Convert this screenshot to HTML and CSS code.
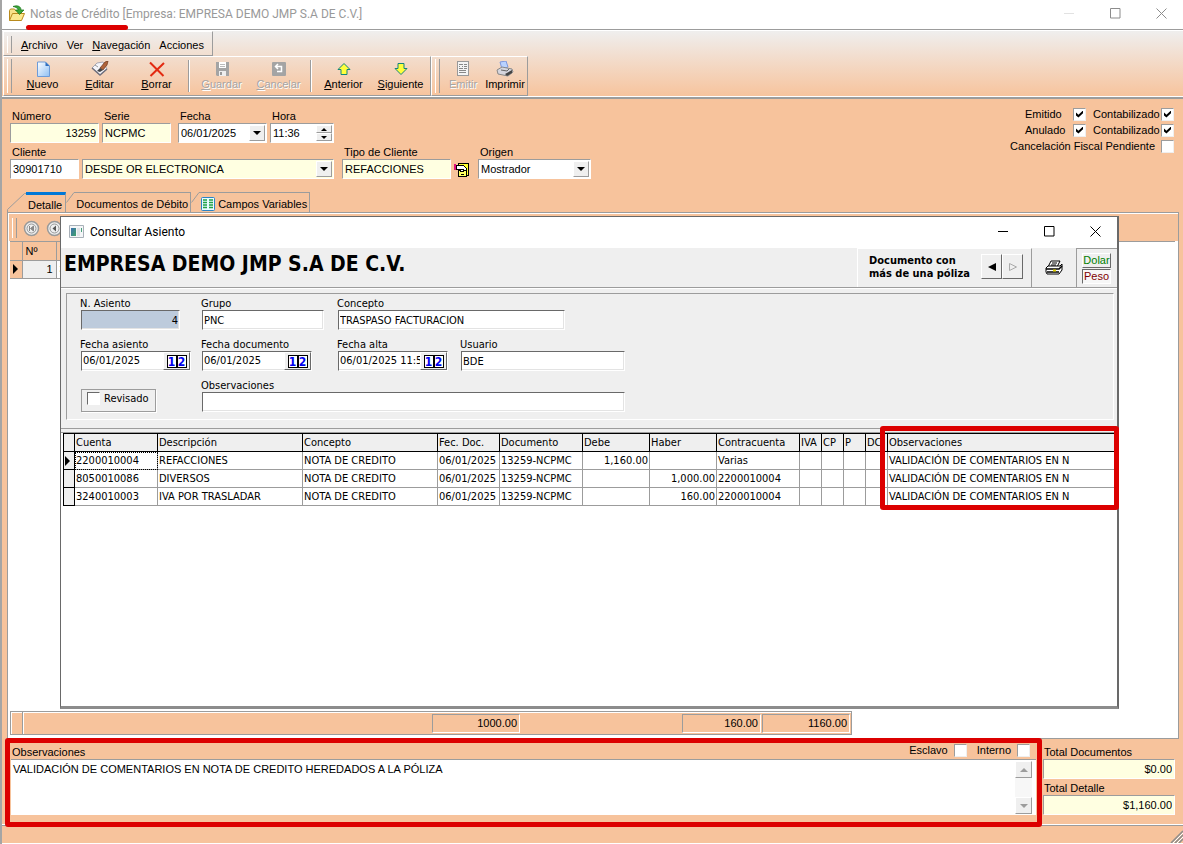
FILE: index.html
```html
<!DOCTYPE html>
<html lang="es">
<head>
<meta charset="utf-8">
<title>Notas de Crédito</title>
<link rel="stylesheet" href="styles.css">
</head>
<body>
<div class="window">
  <header class="titlebar">
    <svg class="title-icon" width="18" height="18" viewBox="0 0 18 18">
      <path d="M1.500 15.500V5.500l1-1.500h4l1 1.500h5.500v3" fill="#f7e28a" stroke="#b98a1c"/>
      <path d="M1.500 15.500l3-7h12l-3 7z" fill="#fbe88f" stroke="#b98a1c"/>
      <path d="M5 1.500c4-1.500 8-.5 8 3.500h3l-4.500 4.500-4-4.500h2.800c-.8-2-2.500-3-5.300-3.500z" fill="#3aa63a" stroke="#157315" stroke-width=".7"/>
    </svg>
    <h1 class="title-text"><span class="marked">Notas de Crédito</span> [Empresa: EMPRESA DEMO JMP S.A DE C.V.]</h1>
    <div class="caption-buttons faded">
      <button type="button" aria-label="Minimizar" class="dim"><svg width="11" height="11"><path d="M0 5.500h10" stroke="currentColor"/></svg></button>
      <button type="button" aria-label="Maximizar"><svg width="11" height="11"><path d="M.5.500h9.500v9.500H.5z" fill="none" stroke="currentColor"/></svg></button>
      <button type="button" aria-label="Cerrar"><svg width="11" height="11"><path d="M.5.500l10 10M10.500.500l-10 10" stroke="currentColor"/></svg></button>
    </div>
  </header>

  <div class="rebar">
    <nav class="band menu-band">
      <button type="button"><u>A</u>rchivo</button>
      <button type="button">Ver</button>
      <button type="button"><u>N</u>avegación</button>
      <button type="button">Acciones</button>
    </nav>
    <div class="band-row">
      <div class="band tool-band">
        <button type="button" class="tool">
          <svg width="16" height="16"><defs><linearGradient id="pg" x2="1" y2="1"><stop offset="0" stop-color="#fff"/><stop offset="1" stop-color="#8fc0f5"/></linearGradient></defs><path d="M2.500 1h8l4 4v10.500h-12z" fill="url(#pg)" stroke="#6d9bd8"/><path d="M10.500 1v4h4z" fill="#2f6fc0"/></svg>
          <span><u>N</u>uevo</span></button>
        <button type="button" class="tool">
          <svg width="18" height="16"><path d="M1 7l5-5 6-1 4 7-7 6z" fill="#f4f4fa" stroke="#a8a8b4"/><path d="M1 7l8 7 7-6" fill="none" stroke="#70707c" stroke-width="1.500"/><path d="M9 7l5-6 3-1-1 4-4 5z" fill="#b0643c" stroke="#6b3318" stroke-width=".7"/><path d="M6 10l3-3 3 2-3 2z" fill="#444"/><path d="M4 4l3 2" stroke="#999"/></svg>
          <span><u>E</u>ditar</span></button>
        <button type="button" class="tool">
          <svg width="16" height="16"><path d="M1 1.500L14.500 15M15 2L1.500 15" stroke="#e32a10" stroke-width="2"/></svg>
          <span><u>B</u>orrar</span></button>
        <i class="sep"></i>
        <button type="button" class="tool" disabled>
          <svg width="16" height="16"><path d="M2 1h13v14H3l-1-1z" fill="#a4a4a4"/><path d="M5 1h7v6H5z" fill="#fff"/><path d="M6 3.500h5M6 5.500h5" stroke="#bbb"/><path d="M5 10h7v5H5z" fill="#eee"/><path d="M6 11h2v3H6z" fill="#999"/></svg>
          <span><u>G</u>uardar</span></button>
        <button type="button" class="tool" disabled>
          <svg width="16" height="16"><rect x="1" y="1" width="14" height="14" rx="1" fill="#a4a4a4"/><path d="M5 5.500h5.500v5H6M7 3L4.500 5.500 7 8" fill="none" stroke="#fff" stroke-width="1.500"/></svg>
          <span><u>C</u>ancelar</span></button>
        <i class="sep"></i>
        <button type="button" class="tool">
          <svg width="16" height="16"><path d="M8 2.500l6 6h-3v5H5v-5H2z" fill="#ffff3c" stroke="#13857c"/></svg>
          <span><u>A</u>nterior</span></button>
        <button type="button" class="tool">
          <svg width="16" height="16"><path d="M5 2.500h6v5h3l-6 6-6-6h3z" fill="#ffff3c" stroke="#13857c"/></svg>
          <span><u>S</u>iguiente</span></button>
      </div>
      <div class="band tool-band narrow">
        <button type="button" class="tool" disabled>
          <svg width="16" height="16" shape-rendering="crispEdges"><path d="M2.500.500h11v14h-11z" fill="#f4f4f4" stroke="#999"/><path d="M4 3.500h4M4 5.500h1M7 5.500h1M4 7.500h4M9 3.500h3M9 5.500h3M9 7.500h3M4 9.500h7M4 11.500h7" stroke="#888"/></svg>
          <span>Emitir</span></button>
        <button type="button" class="tool">
          <svg width="18" height="16"><path d="M4 1l6-1 2 6-6 2z" fill="#b9d2ff" stroke="#7d97dd"/><path d="M1 9l5-3 10 2 1 3-5 4-10-2z" fill="#d6d6de" stroke="#888"/><path d="M9 13l7-4v3l-5 3z" fill="#444"/><path d="M5 9l6 1 2-2" stroke="#666" fill="none"/></svg>
          <span>Imprimir</span></button>
      </div>
    </div>
  </div>

  <main class="body">
    <form class="form">
      <div class="fields">
        <div class="line">
          <div class="field w-89"><label for="numero">Número</label><input id="numero" class="box soft num" value="13259"></div>
          <div class="field w-69 gap-7"><label for="serie">Serie</label><input id="serie" class="box soft" value="NCPMC"></div>
          <div class="field w-89"><label for="fecha">Fecha</label><div class="box combo"><input id="fecha" value="06/01/2025"><button type="button" class="drop" aria-label="Abrir fecha"></button></div></div>
          <div class="field w-64"><label for="hora">Hora</label><div class="box combo"><input id="hora" value="11:36"><span class="spin"><button type="button" class="up" aria-label="Más"></button><button type="button" class="down" aria-label="Menos"></button></span></div></div>
        </div>
        <div class="line">
          <div class="field w-69"><label for="cliente">Cliente</label><input id="cliente" class="box" value="30901710"></div>
          <div class="field w-252 gap-8"><div class="box combo soft"><select id="nombre" aria-label="Nombre de cliente"><option>DESDE OR ELECTRONICA</option></select><i class="drop"></i></div></div>
          <div class="field w-109"><label for="tipo">Tipo de Cliente</label><input id="tipo" class="box soft" value="REFACCIONES"></div>
          <button type="button" class="card-button" aria-label="Ficha de cliente">
            <svg width="16" height="16" shape-rendering="crispEdges"><path d="M4.500 1.500h10v12h-10z" fill="#ffff30" stroke="#000"/><path d="M2.500 3.500h7l3 3v2h-5l-2-1h-3z" fill="#fff" stroke="#000"/><path d="M0 2h2v6H0z" fill="#e0107c"/><path d="M4.500 8.500h8v6h-8z" fill="#ffff60" stroke="#000"/><path d="M6.500 7.500h3v2h-3zM7 12.500h3" stroke="#000" fill="#fff"/></svg>
          </button>
          <div class="field w-113"><label for="origen">Origen</label><div class="box combo"><select id="origen"><option>Mostrador</option></select><i class="drop"></i></div></div>
        </div>
      </div>
      <div class="flags">
        <label for="emitido">Emitido</label><input type="checkbox" id="emitido" checked>
        <label for="cont1" class="second">Contabilizado</label><input type="checkbox" id="cont1" checked>
        <label for="anulado">Anulado</label><input type="checkbox" id="anulado" checked>
        <label for="cont2" class="second">Contabilizado</label><input type="checkbox" id="cont2" checked>
        <label for="cancel" class="wide">Cancelación Fiscal Pendiente</label><input type="checkbox" id="cancel">
      </div>
    </form>

    <div class="tabs" role="tablist">
      <button type="button" class="tab active" role="tab"><svg width="19" height="21"><path d="M.5 21v-3.500L17.500 1.500H19" fill="none" stroke="#9c9c9c"/></svg><span>Detalle</span></button>
      <button type="button" class="tab" role="tab"><svg width="10" height="21"><path d="M.5 10.500l7.500-10h2" fill="none" stroke="#9c9c9c"/></svg><span>Documentos de Débito</span></button>
      <button type="button" class="tab" role="tab"><svg width="10" height="21"><path d="M.5 10.500l7.500-10h2" fill="none" stroke="#9c9c9c"/></svg><span><svg width="14" height="14"><rect x=".5" y=".5" width="13" height="13" rx="1" fill="#e8fbff" stroke="#2a83c6"/><path d="M2 3h4M2 5.500h4M2 8h4M2 10.500h4M8 3h4M8 5.500h4M8 8h4M8 10.500h4" stroke="#21a045" stroke-width="1.500"/></svg>Campos Variables</span></button>
    </div>

    <section class="panel">
      <div class="detail-tools">
        <button type="button" aria-label="Primero"><svg width="17" height="17"><circle cx="8.500" cy="8.500" r="7" fill="#eee" stroke="#999" stroke-width="1.500"/><circle cx="8.500" cy="8.500" r="4.500" fill="none" stroke="#999"/><path d="M6.500 6v5M10.500 6L7.500 8.500l3 2.500z" stroke="#888" fill="#888"/></svg></button>
        <button type="button" aria-label="Anterior"><svg width="17" height="17"><circle cx="8.500" cy="8.500" r="7" fill="#eee" stroke="#999" stroke-width="1.500"/><circle cx="8.500" cy="8.500" r="4.500" fill="none" stroke="#999"/><path d="M10 5.500L6.500 8.500l3.500 3z" fill="#555"/></svg></button>
      </div>
      <div class="detail-grid">
        <table class="detail-table">
          <tr><th class="mark"></th><th>Nº</th><th></th></tr>
          <tr><td class="mark"><i class="pointer"></i></td><td class="num">1</td><td>3</td></tr>
        </table>
      </div>
      <div class="totals">
        <i class="totals-mark"></i>
        <output class="total first">1000.00</output>
        <output class="total second">160.00</output>
        <output class="total">1160.00</output>
      </div>
    </section>

    <section class="bottom">
      <div class="notes">
        <div class="notes-head">
          <label for="obs">Observaciones</label>
          <span class="notes-flags"><label for="esclavo">Esclavo</label><input type="checkbox" id="esclavo"><label for="interno" class="spaced">Interno</label><input type="checkbox" id="interno"></span>
        </div>
        <div class="notes-box">
          <textarea id="obs">VALIDACIÓN DE COMENTARIOS EN NOTA DE CREDITO HEREDADOS A LA PÓLIZA</textarea>
          <div class="scroll"><button type="button" class="up" aria-label="Subir"></button><button type="button" class="down" aria-label="Bajar"></button></div>
        </div>
        <i class="frame"></i>
      </div>
      <div class="sums">
        <label for="tdoc">Total Documentos</label><input id="tdoc" class="box soft num" value="$0.00">
        <label for="tdet">Total Detalle</label><input id="tdet" class="box soft num" value="$1,160.00">
      </div>
    </section>
  </main>
  <footer class="status"><svg width="14" height="14"><path d="M2 14L14 2M6 14l8-8M10 14l4-4" stroke="#8c8c8c" stroke-width="1.500"/><path d="M4 14L14 4M8 14l6-6" stroke="#fff"/></svg></footer>

  <div class="dialog" role="dialog" aria-label="Consultar Asiento">
    <div class="dialog-title">
      <svg width="15" height="13"><defs><linearGradient id="wg" x2="1" y2="1"><stop offset="0" stop-color="#3d6fb0"/><stop offset="1" stop-color="#3fa36a"/></linearGradient></defs><path d="M.5.500h14v12H.5z" fill="#f4f6f8" stroke="#a8b0b8"/><path d="M2 3h5v8H2z" fill="url(#wg)"/><path d="M8 3h3v8H8z" fill="#dfe3e6"/><path d="M12 3h1v4h-1z" fill="#4aa07a"/></svg>
      <h2>Consultar Asiento</h2>
      <div class="caption-buttons">
        <button type="button" aria-label="Minimizar"><svg width="11" height="11"><path d="M0 5.500h10" stroke="currentColor"/></svg></button>
        <button type="button" aria-label="Maximizar"><svg width="11" height="11"><path d="M.5.500h9.500v9.500H.5z" fill="none" stroke="currentColor"/></svg></button>
        <button type="button" aria-label="Cerrar"><svg width="11" height="11"><path d="M.5.500l10 10M10.500.500l-10 10" stroke="currentColor"/></svg></button>
      </div>
    </div>
    <div class="dialog-head">
      <h3>EMPRESA DEMO JMP S.A DE C.V.</h3>
      <div class="policy">
        <p>Documento con<br>más de una póliza</p>
        <button type="button" aria-label="Anterior"><svg width="10" height="10"><path d="M9 1v8L1 5z" fill="#000"/></svg></button>
        <button type="button" aria-label="Siguiente" disabled><svg width="10" height="10"><path d="M1.500 1.500v7l7-3.500z" fill="none" stroke="#aaa"/></svg></button>
      </div>
      <button type="button" class="print" aria-label="Imprimir">
        <svg width="18" height="16"><path d="M6 1h9l-3 6H3z" fill="#fff" stroke="#000"/><path d="M7 3h5M6 5h5" stroke="#000"/><path d="M1 8l2-2h12l2-2v6l-3 4H2l-1-2z" fill="#fff" stroke="#000"/><path d="M1 9h13l3-3M2 12h12" stroke="#000" stroke-width="1.500" fill="none"/><path d="M8 10.500h3" stroke="#e2d000" stroke-width="2"/></svg>
      </button>
      <div class="currency"><button type="button" class="dolar">Dolar</button><button type="button" class="peso">Peso</button></div>
    </div>
    <div class="dialog-form">
      <div class="group">
        <div class="dfield"><label for="nas">N. Asiento</label><input id="nas" class="sunk w-99 blue num" value="4"></div>
        <div class="dfield"><label for="grupo">Grupo</label><input id="grupo" class="sunk w-122" value="PNC"></div>
        <div class="dfield span2"><label for="concepto">Concepto</label><input id="concepto" class="sunk w-227" value="TRASPASO FACTURACION"></div>
        <div class="dfield"><label for="fas">Fecha asiento</label><div class="sunk w-110 date"><input id="fas" value="06/01/2025"><button type="button" aria-label="Calendario"><b>1</b><b>2</b></button></div></div>
        <div class="dfield"><label for="fdo">Fecha documento</label><div class="sunk w-110 date"><input id="fdo" value="06/01/2025"><button type="button" aria-label="Calendario"><b>1</b><b>2</b></button></div></div>
        <div class="dfield"><label for="fal">Fecha alta</label><div class="sunk w-110 date"><input id="fal" value="06/01/2025 11:5"><button type="button" aria-label="Calendario"><b>1</b><b>2</b></button></div></div>
        <div class="dfield"><label for="usu">Usuario</label><input id="usu" class="sunk" value="BDE"></div>
        <div class="revisado"><input type="checkbox" id="rev"><label for="rev">Revisado</label></div>
        <div class="dfield span3"><label for="dobs">Observaciones</label><input id="dobs" class="sunk"></div>
      </div>
    </div>
    <div class="entries">
      <table class="entry-table">
        <colgroup><col class="c-11"><col class="c-83"><col class="c-145"><col class="c-135"><col class="c-62"><col class="c-83"><col class="c-67"><col class="c-67"><col class="c-83"><col class="c-22"><col class="c-22"><col class="c-22"><col class="c-22"><col></colgroup>
        <thead><tr><th></th><th>Cuenta</th><th>Descripción</th><th>Concepto</th><th>Fec. Doc.</th><th>Documento</th><th>Debe</th><th>Haber</th><th>Contracuenta</th><th>IVA</th><th>CP</th><th>P</th><th>DC</th><th>Observaciones</th></tr></thead>
        <tbody>
          <tr><td><i class="pointer"></i></td><td class="focus">2200010004</td><td>REFACCIONES</td><td>NOTA DE CREDITO</td><td>06/01/2025</td><td>13259-NCPMC</td><td class="num">1,160.00</td><td></td><td>Varias</td><td></td><td></td><td></td><td></td><td>VALIDACIÓN DE COMENTARIOS EN N</td></tr>
          <tr><td></td><td>8050010086</td><td>DIVERSOS</td><td>NOTA DE CREDITO</td><td>06/01/2025</td><td>13259-NCPMC</td><td></td><td class="num">1,000.00</td><td>2200010004</td><td></td><td></td><td></td><td></td><td>VALIDACIÓN DE COMENTARIOS EN N</td></tr>
          <tr><td></td><td>3240010003</td><td>IVA POR TRASLADAR</td><td>NOTA DE CREDITO</td><td>06/01/2025</td><td>13259-NCPMC</td><td></td><td class="num">160.00</td><td>2200010004</td><td></td><td></td><td></td><td></td><td>VALIDACIÓN DE COMENTARIOS EN N</td></tr>
        </tbody>
      </table>
      <i class="frame"></i>
    </div>
  </div>
</div>
</body>
</html>
```

FILE: styles.css
```css
:root {
  --peach: #f7c39c;
  --face: #efefef;
  --line: #9c9c9c;
  --dark: #696969;
  --cream: #ffffe1;
  --red: #dc0000;
  --ui: "Liberation Sans", Arial, sans-serif;
  --dlg: "DejaVu Sans Condensed", "Noto Sans", sans-serif;
  --caption: Roboto, "Open Sans", sans-serif;
}

* { box-sizing: border-box; }

body { margin: 0; font: 11px/14px var(--ui); color: #000; }

button, input, select, textarea {
  font: inherit; color: inherit; margin: 0; padding: 0; border: 0;
  background: none; border-radius: 0; outline: 0; min-width: 0;
}
h1, h2, h3, p { margin: 0; font-weight: normal; }
svg { display: block; flex: none; }
.num { text-align: right; }

.window {
  position: relative; display: flex; flex-direction: column;
  min-height: 100vh; background: var(--peach);
  border-left: 2px solid #a5a5a5;
}

/* Title bar */
.titlebar { display: flex; align-items: center; height: 29px; padding: 0 7px 2px 6px; background: #fff; }
.title-text { margin-left: 4px; font: 12px/16px var(--caption); color: #999; white-space: nowrap; }
.marked { position: relative; }
.marked::after {
  content: ""; position: absolute; left: -4px; right: -8px; top: 18px;
  height: 5px; border-radius: 3px; background: var(--red); z-index: 2;
}
.caption-buttons { display: flex; margin-left: auto; }
.caption-buttons button { display: grid; place-items: center; width: 46px; height: 22px; }
.caption-buttons button:last-child { width: 30px; margin-left: 8px; }
.faded { color: #8c8c8c; }
.dim { color: #e2e2e2; }

/* Rebar */
.rebar {
  display: flex; flex-direction: column; align-items: flex-start;
  border-top: 1px solid var(--line); border-bottom: 1px solid var(--line);
  box-shadow: inset 0 1px #fff, inset 0 -1px #fff;
  padding: 1px 0 1px 1px; background: linear-gradient(var(--face), var(--peach));
}
.band {
  display: flex; align-items: center; position: relative; padding-left: 11px;
  border: 1px solid; border-color: #fff var(--line) var(--line) #fff;
}
.band::before {
  content: ""; align-self: stretch; width: 3px; margin: 2px 0 2px -8px;
  border-left: 1px solid #fff; border-right: 1px solid var(--line);
}
.menu-band { height: 25px; gap: 9px; padding: 2px 8px 0 11px; }
.band-row { display: flex; }
.tool-band { height: 40px; padding-right: 1px; }
.tool-band::before { margin-right: 2px; }
.tool { display: flex; flex-direction: column; align-items: center; width: 57px; padding-bottom: 1px; }
.narrow .tool { width: 42px; }
.narrow::before { margin-right: 2px; }
.tool:disabled { color: #a5a5a5; text-shadow: 1px 1px #fff; }
.sep { width: 2px; height: 32px; margin: 0 3px; border-left: 1px solid var(--line); border-right: 1px solid #fff; }

/* Main body */
.body { display: flex; flex-direction: column; flex: 1; padding: 8px 4px 0 5px; box-shadow: inset 0 1px var(--line); }
.form { display: flex; justify-content: space-between; padding: 0 5px 0 3px; }
.fields { display: flex; flex-direction: column; gap: 2px; padding-top: 3px; }
.line { display: flex; align-items: flex-end; gap: 3px; }
.field label { display: block; padding-left: 2px; white-space: nowrap; }
.gap-7 { margin-right: 4px; }
.gap-8 { margin-right: 5px; }
.w-64 { width: 64px; } .w-69 { width: 69px; } .w-89 { width: 89px; }
.w-99 { width: 99px; } .w-109 { width: 109px; } .w-110 { width: 110px; }
.w-113 { width: 113px; } .w-122 { width: 122px; } .w-227 { width: 227px; } .w-252 { width: 252px; }

.box {
  display: block; width: 100%; height: 20px; padding: 0 2px; background: #fff;
  border: 1px solid; border-color: var(--line) #fff #fff var(--line);
}
.soft { background: var(--cream); }
.combo { display: flex; align-items: stretch; padding: 1px; }
.combo input, .combo select { flex: 1; width: 0; padding-left: 1px; appearance: none; }
.drop, .spin button, .scroll button {
  display: grid; place-items: center; background: var(--face);
  border: 1px solid; border-color: #fff var(--line) var(--line) #fff;
}
.drop { width: 16px; pointer-events: none; }
.drop::after, .down::after { content: ""; border: 4px solid transparent; border-top-color: #000; border-bottom: 0; }
.up::after { content: ""; border: 4px solid transparent; border-bottom-color: #000; border-top: 0; }
.spin { display: grid; grid-template-rows: 1fr 1fr; width: 16px; }
.spin .up::after, .spin .down::after { border-left-width: 3px; border-right-width: 3px; }
.spin .up::after { border-bottom-width: 3px; }
.spin .down::after { border-top-width: 3px; }
.card-button { width: 21px; height: 18px; }

.flags { display: grid; grid-template-columns: 48px 13px 75px 13px; grid-auto-rows: 16px; align-items: center; align-content: start; white-space: nowrap; }
.flags .second { padding-left: 7px; }
.flags .wide { grid-column: 1 / 4; justify-self: end; padding-right: 6px; }
input[type="checkbox"] {
  appearance: none; flex: none; width: 13px; height: 13px; background: #fff;
  border: 1px solid; border-color: var(--line) var(--face) var(--face) var(--line);
}
input[type="checkbox"]:checked::before {
  content: ""; display: block; width: 7px; height: 7px; margin: 2px;
  background: #000; clip-path: polygon(0 30%, 35% 60%, 100% 0, 100% 40%, 35% 100%, 0 70%);
}

/* Tabs */
.tabs { display: flex; height: 20px; margin-top: 13px; }
.tab { display: flex; height: 21px; }
.tab > span {
  display: flex; align-items: center; gap: 3px; height: 20px; padding: 3px 2px 0 0;
  border-top: 1px solid var(--line); border-right: 1px solid var(--line); white-space: nowrap;
}
.tab.active > span { height: 21px; border-top: 3px solid #0078d7; padding: 1px 3px 0 2px; background: var(--peach); }

.panel {
  display: flex; flex-direction: column; flex: 1; padding: 2px 3px 3px 2px;
  border: 1px solid var(--line); box-shadow: inset 1px 1px #fff;
  background: linear-gradient(var(--peach), var(--peach)) 0 0 / 100% 28px no-repeat, #fff;
}
.detail-tools { display: flex; align-items: center; gap: 6px; height: 27px; padding-left: 2px; border-bottom: 1px solid var(--line); }
.detail-tools::before { content: ""; width: 3px; height: 20px; border-left: 1px solid #fff; border-right: 1px solid var(--line); }
.detail-grid { flex: 1; min-height: 100px; background: #fff; }
.detail-table { border-collapse: collapse; table-layout: fixed; width: 100px; }
.detail-table th, .detail-table td { height: 18px; padding: 0 3px; border-right: 1px solid var(--line); border-bottom: 1px solid var(--line); font-weight: normal; text-align: left; }
.detail-table th, .detail-table .mark { background: var(--peach); }
.detail-table th:nth-child(2) { width: 34px; }
.detail-table .mark { width: 12px; padding: 0 3px; }
.detail-table td.num { text-align: right; background: var(--face); }
.pointer { display: block; width: 0; border: 5px solid transparent; border-left-color: #000; border-right: 0; }
.totals {
  display: flex; align-items: center; justify-content: flex-end; width: 842px; height: 24px; padding-right: 1px;
  background: var(--peach); border: 1px solid var(--line); box-shadow: inset 1px 1px #fff;
}
.totals-mark { align-self: stretch; width: 12px; margin-right: auto; border-right: 1px solid var(--line); box-shadow: 1px 0 #fff; }
.total { width: 88px; height: 19px; padding: 1px 2px; text-align: right; border: 1px solid; border-color: var(--line) #fff #fff var(--line); }
.total.first { margin-right: 162px; }
.total.second { width: 79px; margin-right: 1px; }

/* Observations and sums */
.bottom { display: flex; gap: 7px; padding: 6px 4px 9px; }
.notes { position: relative; flex: 1; }
.notes-head { display: flex; justify-content: space-between; padding-left: 1px; height: 14px; }
.notes-flags { display: flex; align-items: center; gap: 6px; height: 10px; padding-right: 6px; }
.notes-flags .spaced { margin-left: 4px; }
.notes-box { display: flex; height: 56px; padding: 1px; background: #fff; border-top: 1px solid var(--line); }
.notes-box textarea { flex: 1; padding: 1px; resize: none; overflow: hidden; }
.scroll { display: flex; flex-direction: column; justify-content: space-between; width: 17px; margin-right: 3px; background: #f7f7f7; }
.scroll button { height: 17px; }
.scroll .up::after { border-bottom-color: var(--line); }
.scroll .down::after { border-top-color: var(--line); }
.frame { position: absolute; border: 5px solid var(--red); border-radius: 3px; pointer-events: none; }
.notes .frame { inset: -7px -6px -12px -6px; z-index: 1; }
.sums { display: flex; flex-direction: column; width: 132px; }
.sums label { padding-left: 1px; }
.sums .box + label { margin-top: 2px; }

.status { display: flex; justify-content: flex-end; align-items: flex-end; height: 20px; border-top: 1px solid #fff; border-bottom: 1px solid #fff; box-shadow: inset 0 1px var(--line); }

/* Entry dialog */
.dialog {
  position: absolute; left: 58px; right: 64px; top: 216px; bottom: 135px; z-index: 3;
  display: flex; flex-direction: column; background: var(--face);
  border: 1px solid var(--dark); border-right-width: 2px; border-bottom: 3px solid #8c8c8c; font-family: var(--dlg);
}
.dialog-title { display: flex; align-items: center; height: 31px; padding: 0 7px 2px 8px; background: #fff; }
.dialog-title h2 { margin-left: 6px; font: 12px/16px var(--caption); }
.dialog-head { display: flex; align-items: stretch; height: 40px; border-bottom: 1px solid var(--line); }
.dialog-head h3 { margin: 2px auto 0 3px; font: bold 21px/28px var(--dlg); white-space: nowrap; }
.policy { display: flex; align-items: center; width: 175px; padding: 0 0 3px 11px; border-left: 1px solid #fff; border-top: 1px solid #fff; border-right: 1px solid var(--line); }
.policy p { flex: 1; font-weight: bold; line-height: 13px; white-space: nowrap; }
.policy button { display: grid; place-items: center; width: 21px; height: 25px; border: 1px solid; border-color: #fff var(--dark) var(--dark) #fff; }
.policy button:last-child { margin-right: 8px; }
.print { display: grid; place-items: center; width: 44px; }
.currency { display: flex; flex-direction: column; gap: 1px; width: 41px; padding: 4px 6px 4px 5px; border-left: 1px solid var(--line); border-top: 1px solid var(--line); }
.currency button { height: 15px; border: 1px solid; font: 11px/13px var(--ui); }
.currency .dolar { color: #008000; border-color: #fff var(--dark) var(--dark) #fff; }
.currency .peso { color: #800000; background: #f7f7f7; border-color: var(--dark) #fff #fff var(--dark); }

.dialog-form { padding: 4px 3px 8px 5px; border-top: 1px solid #fff; border-bottom: 1px solid var(--line); }
.group {
  display: grid; grid-template-columns: 121px 136px 123px 165px; row-gap: 8px; padding: 3px 0 7px 13px;
  border: 1px solid; border-color: var(--line) #fff #fff var(--line);
}
.dfield label { display: block; line-height: 13px; white-space: nowrap; }
.span2 { grid-column: span 2; }
.span3 { grid-column: span 3; }
.sunk {
  display: block; height: 20px; margin-left: 1px; padding: 0 1px; background: #fff;
  border: 1px solid; border-color: var(--dark) #fff #fff var(--dark); box-shadow: inset -1px -1px #e3e3e3;
}
input.sunk:not([class*="w-"]) { width: calc(100% - 1px); }
.blue { background: #bdcbdc; }
.date { display: flex; padding: 0; }
.date input { flex: 1; width: 0; padding-left: 1px; }
.date button { display: flex; align-items: center; justify-content: center; width: 27px; background: var(--face); border: 1px solid; border-color: #fff var(--dark) var(--dark) #fff; }
.date b { width: 10px; height: 13px; border: 1px solid #000; background: #fff; color: #0000f0; font-size: 12px; line-height: 12px; text-align: center; }
.revisado { display: flex; align-items: center; gap: 4px; width: 75px; height: 23px; margin: 10px 0 0 1px; padding: 0 5px 4px; border: 1px solid var(--line); box-shadow: 1px 1px #fff; }
.revisado input { border-color: var(--dark) #fff #fff var(--dark); }

.entries { position: relative; flex: 1; margin-top: 3px; padding: 0 0 0 2px; background: #fff; border-top: 1px solid var(--line); }
.entry-table { width: 100%; table-layout: fixed; border-collapse: collapse; white-space: nowrap; }
.c-11 { width: 11px; } .c-22 { width: 22px; } .c-62 { width: 62px; } .c-67 { width: 67px; }
.c-83 { width: 83px; } .c-135 { width: 135px; } .c-145 { width: 145px; }
.entry-table th, .entry-table td { height: 18px; padding: 0 1px; overflow: hidden; font-weight: normal; text-align: left; border: 1px solid var(--line); }
.entry-table th { background: var(--face); }
.entry-table th, .entry-table td:first-child { border-color: #000; }
.entry-table td:first-child { background: var(--face); }
.entry-table td.num { text-align: right; }
.entry-table .focus { outline: 1px dotted #000; outline-offset: -1px; }
.entries .frame { right: -2px; top: -7px; width: 239px; height: 84px; }
```
